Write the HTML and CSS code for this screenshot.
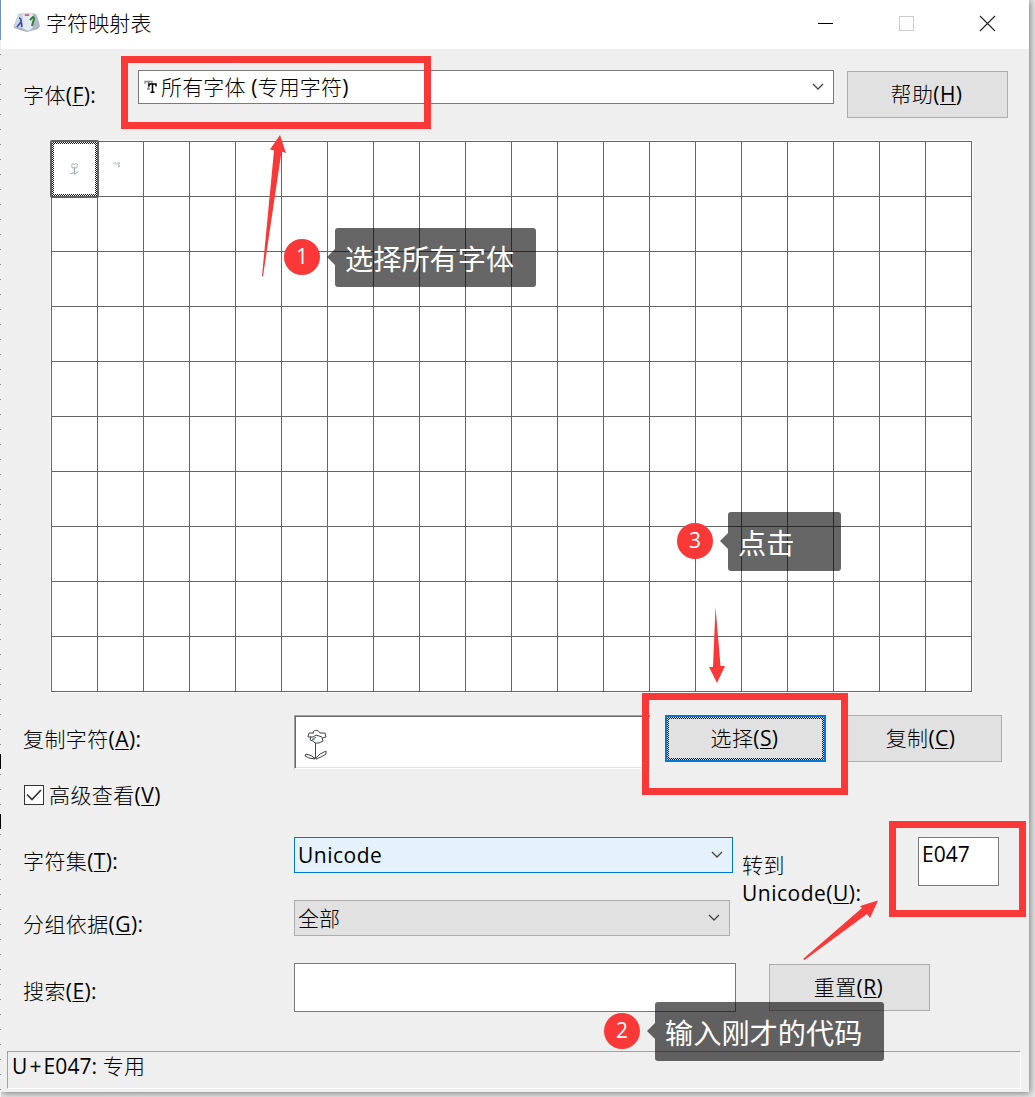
FILE: index.html
```html
<!DOCTYPE html>
<html lang="zh-CN">
<head>
<meta charset="utf-8">
<title>字符映射表</title>
<link rel="stylesheet" href="styles.css">
</head>
<body>
<div class="desktop">
<main class="window">
  <header class="titlebar">
    <svg class="app-icon" width="28" height="20" viewBox="0 0 28 20">
      <path d="M5 2Q6 0 9 .5H20Q23 0 24 3L27 13Q25 17 21 17L14 19L7 17L1 15Q0 13 2 10Z" fill="#a5b3c0"/>
      <path d="M5 2L10 1L9 15L1 14Z" fill="#c9d7e2"/>
      <path d="M10 1H20V15L15 18L9 15Z" fill="#e3eaf0"/>
      <path d="M20 1L23 3L26 13L21 15Z" fill="#b0bcc8"/>
      <path d="M12 1.500Q14 3 16 1.500" fill="none" stroke="#c46069" stroke-width="1.600"/>
      <path d="M6 5Q8 5 8 8L9 14M8 9L4 14" fill="none" stroke="#4348a0" stroke-width="1.600"/>
      <path d="M17 7L20 4Q22 5 20 9L19 13" fill="none" stroke="#328044" stroke-width="2"/>
    </svg>
    <h1>字符映射表</h1>
    <svg class="controls" width="180" height="20" viewBox="0 0 180 20">
      <path d="M1 10.500H16" stroke="#000"/>
      <rect x="82.500" y="3.500" width="14" height="14" fill="none" stroke="#ccc"/>
      <path d="M163 3L178 18M178 3L163 18" stroke="#222" stroke-width="1.100"/>
    </svg>
  </header>

  <section class="row font-row">
    <label>字体(<u>F</u>):</label>
    <div class="select font-select">
      <svg class="tt" width="14" height="16" viewBox="0 0 14 16"><path d="M1 5V2.500H8V5M4.500 2.500V10M3 10H6" fill="none" stroke="#888" stroke-width="1.300"/><path d="M5 7.500V5H12V7.500M8.500 5V13M6.500 13.300H10.500" fill="none" stroke="#000" stroke-width="1.500"/></svg>
      <span>所有字体 (专用字符)</span>
      <svg class="chevron" width="12" height="8" viewBox="0 0 12 8"><path d="M1 1L6 6L11 1"/></svg>
    </div>
    <button class="help">帮助(<u>H</u>)</button>
  </section>

  <section class="char-grid">
    <div class="cell selected">
      <svg width="10" height="12" viewBox="0 0 24 32"><g class="mini"><path d="M12 4C18-1 24 4 19 7C21 14 14 14 12 11C7 15 2 12 6 8C1 5 7 0 12 4ZM12 12V29M1 29L9 26L12 30L22 23"/></g></svg>
    </div>
    <div class="cell second"><svg width="8" height="6" viewBox="0 0 8 6"><path d="M0 1H3V3M4 1L7 1L5 3L7 4L5 5" fill="none" stroke="#a7b2b4" stroke-width=".9"/></svg></div>
  </section>

  <section class="row copy-row">
    <label>复制字符(<u>A</u>):</label>
    <div class="copy-field">
      <svg class="flower" width="24" height="32" viewBox="0 0 24 32">
        <path d="M9 4C9 1 14 0 16 4H21L22 8L18 9L19 12L15 14H11L9 12L6 11L7 8H4L5 4H10M6 8H9L12 6L18 8M8 11L12 8M11.500 14V30"/>
        <path d="M11 30L8 27L2 25L1 27L5 29L11 30L16 25L22 22V25L17 28L12 30"/>
        <path class="accent" d="M10 28L13 31M8 10L11 11"/>
      </svg>
    </div>
    <button class="choose"><span>选择(<u>S</u>)</span></button>
    <button class="copy">复制(<u>C</u>)</button>
  </section>

  <label class="row advanced">
    <svg width="20" height="20" viewBox="0 0 20 20"><rect x=".5" y=".5" width="19" height="19" fill="#fff" stroke="#333"/><path d="M3 9.500L8 14.500L17 5" fill="none" stroke="#333" stroke-width="1.700"/></svg>
    <span>高级查看(<u>V</u>)</span>
  </label>

  <section class="options">
    <div class="fields">
      <div class="row charset-row">
        <label>字符集(<u>T</u>):</label>
        <div class="select charset"><span>Unicode</span><svg class="chevron" width="12" height="8" viewBox="0 0 12 8"><path d="M1 1L6 6L11 1"/></svg></div>
      </div>
      <div class="row group-row">
        <label>分组依据(<u>G</u>):</label>
        <div class="select group"><span>全部</span><svg class="chevron" width="12" height="8" viewBox="0 0 12 8"><path d="M1 1L6 6L11 1"/></svg></div>
      </div>
    </div>
    <div class="goto-label">转到<br>Unicode(<u>U</u>):</div>
    <div class="code-field">E047</div>
  </section>

  <section class="row search-row">
    <label>搜索(<u>E</u>):</label>
    <div class="search-field"></div>
    <button class="reset">重置(<u>R</u>)</button>
  </section>

  <footer class="status">U<span class="plus">+</span>E047: 专用</footer>
</main>

<svg class="markup" width="1035" height="1097" viewBox="0 0 1035 1097">
  <g class="frames"><rect x="124.500" y="59.500" width="303" height="66"/><rect x="645.500" y="696.500" width="199" height="95"/><rect x="892.500" y="824.500" width="130" height="89"/></g>
  <g class="arrows">
    <path d="M280 135L286 153L281.500 151.500L263 276.500L262 276L274 150.500L270 149.500Z"/>
    <path d="M715.500 607L720.500 666L725 666L717 683L709 667L713 667Z"/>
    <path d="M878 900.500L870 918L867 914L804.500 960L803 959L862 908L860 906Z"/>
  </g>
</svg>
<div class="badge one">1</div>
<div class="badge two">2</div>
<div class="badge three">3</div>
<div class="callout choose-font">选择所有字体</div>
<div class="callout enter-code">输入刚才的代码</div>
<div class="callout click">点击</div>
</div>
</body>
</html>
```
FILE: styles.css
```css
* { box-sizing: border-box; }
body {
  margin: 0;
  color: #000;
  font: 400 21px/28px "Open Sans", "Noto Sans CJK SC Light", "Noto Sans CJK SC", sans-serif;
}
.desktop {
  position: relative;
  width: 1035px;
  height: 1097px;
  padding-left: 1px;
  overflow: hidden;
  background: #e5e5e5;
}
.desktop::before {
  content: "";
  position: absolute;
  inset: 0 auto 0 0;
  width: 1px;
  background:
    linear-gradient(#000, #000) 0 754px / 1px 15px no-repeat,
    linear-gradient(#000, #000) 0 814px / 1px 15px no-repeat,
    linear-gradient(#6f91c5, #6f91c5) 0 0 / 1px 40px no-repeat,
    repeating-linear-gradient(transparent 0 9px, #888 9px 10px, transparent 10px 15px),
    #efefef;
}
.window {
  width: 1028px;
  height: 1092px;
  background: #efefef;
  box-shadow: 1px 1px 7px #777;
}
.titlebar {
  display: flex;
  align-items: flex-start;
  height: 49px;
  padding: 13px 32px 0 12px;
  background: #fff;
}
h1 { margin: -4px 0 0 5px; font: inherit; letter-spacing: .1px; }
.controls { margin-left: auto; }
.row { display: flex; align-items: flex-start; }
.row > label { flex: none; margin-left: -1px; white-space: nowrap; }
label, button { letter-spacing: .4px; }
u { text-decoration-thickness: 1px; text-underline-offset: 2px; }
button {
  width: 161px;
  height: 47px;
  flex: none;
  padding: 0 2px 2px 0;
  border: 1px solid #adadad;
  border-radius: 0;
  color: #000;
  background: #e1e1e1;
  font: inherit;
}
.select {
  display: flex;
  align-items: center;
  border: 1px solid #7a7a7a;
  background: #fff;
}
.chevron { margin-left: auto; }
.chevron path { fill: none; stroke: #444; stroke-width: 1.3; }

.font-row { height: 92px; padding: 21px 0 0 23px; }
.font-row label { width: 115px; padding-top: 11px; }
.font-select { width: 696px; height: 34px; padding: 0 9px 0 5px; }
.font-select span { margin-left: 3px; letter-spacing: .15px; }
.help { margin: 1px 0 0 13px; }

.char-grid {
  display: flex;
  width: 921px;
  height: 551px;
  margin-left: 50px;
  background:
    repeating-linear-gradient(90deg, #666 0 1px, transparent 1px 46px),
    repeating-linear-gradient(#666 0 1px, transparent 1px 55px),
    #fff;
  box-shadow: 0 0 0 1px #fafafa;
}
.cell { display: flex; width: 46px; height: 55px; align-items: center; justify-content: center; }
.selected {
  width: 49px;
  height: 58px;
  margin: -1px -1px 0 -1px;
  border: 2px solid #626262;
  border-radius: 2px;
  background: repeating-conic-gradient(#111 0 25%, #fff 0 50%) 0 0 / 2px 2px;
}
.selected svg { width: 41px; height: 50px; padding: 19px 15px 19px; background: #fff; }
.mini { fill: none; stroke: #91a3a4; stroke-width: 2.5; }
.second { padding: 0 8px 7px 0; }

.copy-row { height: 93px; padding: 23px 0 0 23px; }
.copy-row label { width: 271px; padding-top: 10px; }
.copy-field {
  width: 357px;
  height: 54px;
  padding: 13px 9px;
  border: 1px solid;
  border-color: #a0a0a0 #fff #fff #a0a0a0;
  background: #fff;
  box-shadow: inset 1px 1px #696969, inset -1px -1px #e3e3e3;
}
.flower { fill: none; stroke: #444; stroke-width: 1; }
.flower .accent { stroke: #549cae; }
.choose {
  margin-left: 14px;
  padding: 2px;
  border: 2px solid #0078d7;
  background: repeating-conic-gradient(#111 0 25%, #e1e1e1 0 50%) 0 0 / 2px 2px;
}
.choose span { display: block; height: 39px; padding-right: 2px; line-height: 39px; background: #e1e1e1; }
.copy { margin-left: 15px; }
.advanced { height: 52px; padding-left: 23px; gap: 5px; }
.advanced span { margin-top: -4px; }

.options { display: flex; height: 126px; }
.fields { width: 732px; padding-left: 23px; }
.fields label { width: 271px; padding-top: 10px; }
.charset-row { height: 63px; }
.charset { width: 439px; height: 36px; padding: 0 9px 0 3px; border-color: #0078d7; background: #e5f1fb; letter-spacing: .5px; }
.group { width: 436px; height: 36px; padding: 0 9px 0 3px; border-color: #adadad; background: #e1e1e1; }
.goto-label { width: 176px; margin-left: 9px; padding-top: 14px; letter-spacing: .5px; }
.code-field { width: 81px; height: 49px; padding: 2px 3px; border: 1px solid #7a7a7a; background: #fff; }
.search-row { height: 88px; padding-left: 23px; }
.search-row label { width: 271px; padding-top: 14px; }
.search-field { width: 442px; height: 49px; border: 1px solid #7a7a7a; background: #fff; }
.reset { margin: 1px 0 0 33px; }
.status {
  width: 1014px;
  height: 38px;
  margin-left: 6px;
  padding: 0 4px;
  border: 1px solid;
  border-color: #a0a0a0 #fff #fff #a0a0a0;
  letter-spacing: .1px;
}
.plus { margin: 0 2px; }

.markup { position: absolute; inset: 0; }
.frames { fill: none; stroke: #fb3838; stroke-width: 7; }
.arrows { fill: #fb3838; }
.badge {
  position: absolute;
  width: 36px;
  height: 36px;
  border-radius: 50%;
  color: #fff;
  background: #fb3838;
  line-height: 34px;
  text-align: center;
}
.one { left: 284px; top: 239px; }
.two { left: 604px; top: 1013px; }
.three { left: 677px; top: 523px; }
.callout {
  position: absolute;
  height: 59px;
  padding-left: 10px;
  border-radius: 3px;
  color: #fff;
  background: rgba(0, 0, 0, .6);
  font-family: "Noto Sans CJK SC", sans-serif;
  font-size: 28.2px;
  line-height: 60px;
  white-space: nowrap;
}
.callout::before {
  content: "";
  position: absolute;
  top: 21px;
  left: -8px;
  border: solid transparent;
  border-width: 8px 8px 8px 0;
  border-right-color: rgba(0, 0, 0, .6);
}
.choose-font { left: 335px; top: 228px; width: 201px; }
.enter-code { left: 655px; top: 1002px; width: 229px; }
.click { left: 728px; top: 512px; width: 113px; }
```
